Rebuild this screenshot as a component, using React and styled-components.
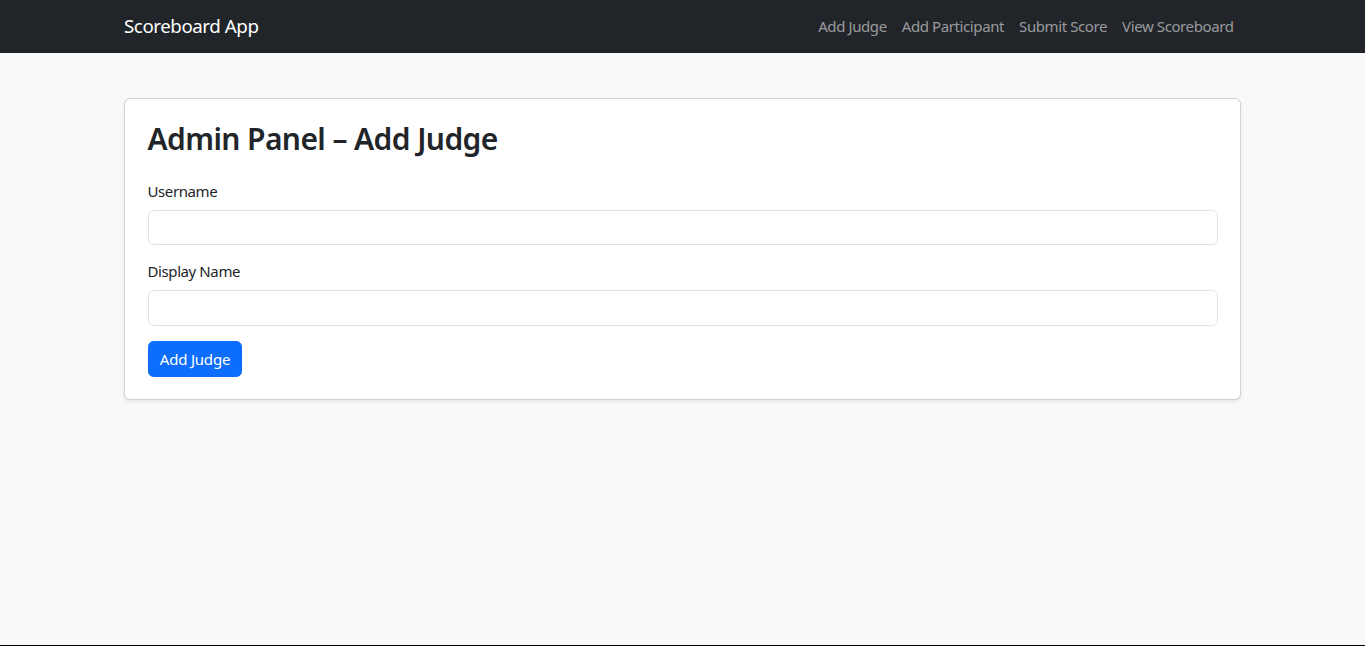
import React from "react";
import styled, { createGlobalStyle } from "styled-components";

const GlobalStyle = createGlobalStyle`
  *, *::before, *::after { box-sizing: border-box; }
  html, body { margin: 0; padding: 0; }
  body {
    font-family: "Segoe UI", "Noto Sans", "Open Sans", sans-serif;
    font-size: 15px;
    line-height: 1.5;
    letter-spacing: -0.4px;
    color: #212529;
    background: #f8f9fa;
  }
`;

const Page = styled.div`
  min-height: 100vh;
  background: #f8f9fa;
  border-bottom: 1px solid #000;
`;

const Navbar = styled.nav`
  height: 52.5px;
  background: #212529;
  display: flex;
  align-items: center;
`;

const Container = styled.div`
  width: 1117px;
  margin: 0 auto;
`;

const NavInner = styled(Container)`
  display: flex;
  align-items: center;
  justify-content: space-between;
`;

const Brand = styled.a`
  color: #fff;
  font-size: 18.75px;
  line-height: 1.5;
  letter-spacing: -0.45px;
  text-decoration: none;
  padding: 4.7px 0;
`;

const NavList = styled.div`
  display: flex;
  align-items: center;
`;

const NavLink = styled.a`
  color: rgba(255, 255, 255, 0.55);
  font-size: 15px;
  text-decoration: none;
  padding: 7.5px 7.5px;
`;

const Main = styled(Container)`
  padding-top: 45px;
`;

const Card = styled.div`
  background: #fff;
  border: 1px solid rgba(0, 0, 0, 0.175);
  border-radius: 6px;
  box-shadow: 0 2px 4px rgba(0, 0, 0, 0.075);
  padding: 22.5px;
`;

const Title = styled.h2`
  margin: 0 0 22.5px;
  font-size: 30px;
  font-weight: 600;
  line-height: 1.2;
  letter-spacing: -0.6px;
`;

const Field = styled.div`
  margin-bottom: 15px;
`;

const Label = styled.label`
  display: block;
  margin-bottom: 7.5px;
`;

const Input = styled.input`
  display: block;
  width: 100%;
  height: 35.75px;
  padding: 5.6px 11.25px;
  font: inherit;
  color: #212529;
  background: #fff;
  border: 1px solid #dee2e6;
  border-radius: 5.6px;
  outline: none;
`;

const Button = styled.button`
  display: inline-block;
  height: 35.75px;
  padding: 5.6px 11.25px;
  font: inherit;
  letter-spacing: -0.2px;
  color: #fff;
  background: #0d6efd;
  border: 1px solid #0d6efd;
  border-radius: 5.6px;
  cursor: pointer;
`;

export default function App() {
  return (
    <>
      <GlobalStyle />
      <Page>
        <Navbar>
          <NavInner>
            <Brand href="#">Scoreboard App</Brand>
            <NavList>
              <NavLink href="#">Add Judge</NavLink>
              <NavLink href="#">Add Participant</NavLink>
              <NavLink href="#">Submit Score</NavLink>
              <NavLink href="#">View Scoreboard</NavLink>
            </NavList>
          </NavInner>
        </Navbar>
        <Main>
          <Card>
            <Title>Admin Panel – Add Judge</Title>
            <Field>
              <Label>Username</Label>
              <Input type="text" />
            </Field>
            <Field>
              <Label>Display Name</Label>
              <Input type="text" />
            </Field>
            <Button type="button">Add Judge</Button>
          </Card>
        </Main>
      </Page>
    </>
  );
}
